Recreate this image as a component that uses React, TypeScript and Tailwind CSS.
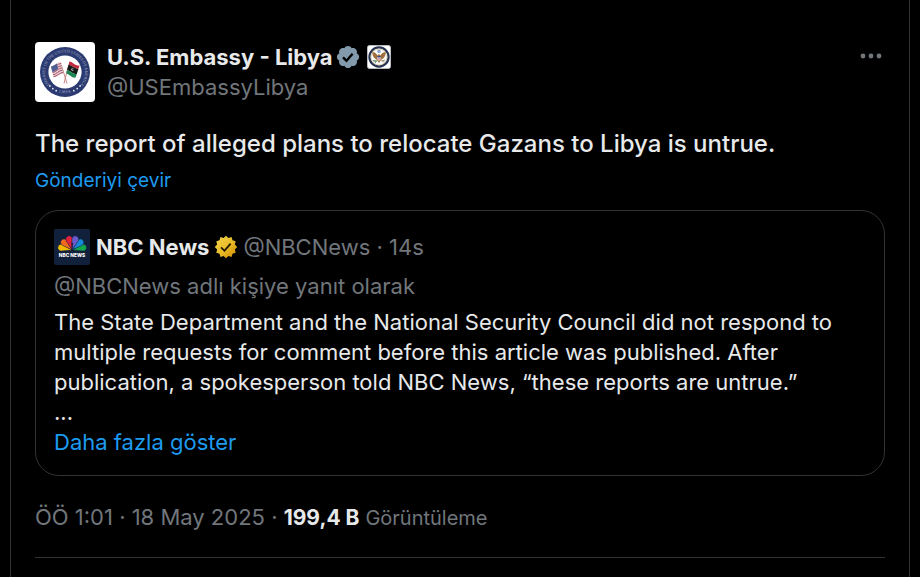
import { clsx } from 'clsx';

const quoteLines = [
  'The State Department and the National Security Council did not respond to',
  'multiple requests for comment before this article was published. After',
  'publication, a spokesperson told NBC News, “these reports are untrue.”',
  '...',
];

const feathers = [
  { angle: -78, color: '#f5b800' },
  { angle: -47, color: '#f26a21' },
  { angle: -16, color: '#e2203c' },
  { angle: 78, color: '#12a84b' },
  { angle: 47, color: '#1689d8' },
  { angle: 16, color: '#6a5acd' },
];

function EmbassySeal() {
  return (
    <svg viewBox="0 0 60 60" className="size-[60px] shrink-0 rounded" role="img" aria-label="Embassy seal">
      <defs>
        <path id="seal-top" d="M14.3 42.7A20 20 0 1 1 45.7 42.7" />
        <path id="seal-bottom" d="M17 46.8A21.5 21.5 0 0 0 43 46.8" />
      </defs>
      <rect width="60" height="60" fill="#fff" />
      <circle cx="30" cy="30" r="25" fill="#2b3a70" />
      <circle cx="30" cy="30" r="16.6" fill="#fff" />
      <text fill="#a3acca" fontSize="4" fontFamily="Liberation Serif, serif">
        <textPath href="#seal-top" startOffset="50%" textAnchor="middle">EMBASSY OF THE UNITED STATES OF AMERICA</textPath>
      </text>
      <text fill="#a3acca" fontSize="4" fontFamily="Liberation Serif, serif">
        <textPath href="#seal-bottom" startOffset="50%" textAnchor="middle">LIBYA</textPath>
      </text>
      <g fill="#e8ebf5">
        <circle cx="14.9" cy="43.9" r="0.9" />
        <circle cx="17.8" cy="46.6" r="0.9" />
        <circle cx="21.2" cy="48.7" r="0.9" />
        <circle cx="45.1" cy="43.9" r="0.9" />
        <circle cx="42.2" cy="46.6" r="0.9" />
        <circle cx="38.8" cy="48.7" r="0.9" />
      </g>
      <path d="M26.5 23.5L32 41.5M33.5 23.5L29 41.5" stroke="#b86a6a" strokeWidth="0.8" />
      <path d="M16 24.5C19 24.5 21.5 20.5 26 19.8L28.4 31.5C24.5 31.5 22 35.5 18.5 35Z" fill="#e3d3d8" />
      <path
        d="M16.5 26.2C20 25.8 22 21.8 26.2 21.4M17 28.4C20.5 28 22.5 24 26.8 23.6M17.5 30.6C21 30.2 23 26.2 27.2 25.8M18 32.8C21.5 32.4 23.5 28.4 27.8 28M18.6 34.6C22 34.6 24 30.8 28.2 30.4"
        stroke="#b04d60"
        strokeWidth="1"
        fill="none"
      />
      <path d="M16 24.5C18.2 24.5 19.8 22.6 21.8 21.6L23.2 26.8C21 28 19.4 30.2 17.3 30Z" fill="#4f5f92" />
      <path d="M34.5 19.5C38 20 40 24 44.5 23.5L43.6 26.6C39.5 27 37 23.2 33.5 22.8Z" fill="#c5283c" />
      <path d="M33.5 22.8C37 23.2 39.5 27 43.6 26.6L41.8 32C37.8 32.2 35.5 28.8 32 28.2Z" fill="#151a18" />
      <path d="M32 28.2C35.5 28.8 37.8 32.2 41.8 32L40.6 35.6C36.5 36 34.5 32 31.2 31.4Z" fill="#1c8650" />
      <circle cx="37.6" cy="27.6" r="1.3" fill="#c9cfcb" />
      <circle cx="38.1" cy="27.4" r="0.9" fill="#151a18" />
    </svg>
  );
}

function StateSeal() {
  return (
    <svg viewBox="0 0 24 24" className="size-6 shrink-0" role="img" aria-label="Department of State">
      <rect x="0.5" y="0.5" width="23" height="23" rx="2" fill="#fff" stroke="#b9bdc1" />
      <circle cx="12" cy="12" r="9.6" fill="#fff" stroke="#26324f" strokeWidth="2.2" />
      <circle cx="12" cy="12" r="7.9" fill="none" stroke="#cdb88a" strokeWidth="0.6" />
      <path d="M5.2 7C7 7 9.5 8 10.5 10.5L12 9L13.5 10.5C14.5 8 17 7 18.8 7C18.6 11 17 13.5 14.5 14.5L12 18L9.5 14.5C7 13.5 5.4 11 5.2 7Z" fill="#a0703c" />
      <path d="M10.2 11h3.6v3.2L12 16l-1.8-1.8Z" fill="#dfe3ee" />
      <path d="M11.2 12v2.8M12.8 12v2.8" stroke="#b5303c" strokeWidth="0.6" />
      <path d="M10.2 11h3.6v1.1h-3.6Z" fill="#31457d" />
      <circle cx="12" cy="6.4" r="1.8" fill="#8fa7cf" />
      <path d="M6 15.5L9.5 16.5M8 17.5L9.5 15.5" stroke="#4d8358" strokeWidth="1.3" />
      <path d="M14.5 16L18 15M14.8 15.2L17 17.5" stroke="#8c7b5e" strokeWidth="0.9" />
    </svg>
  );
}

function NbcLogo() {
  return (
    <svg viewBox="0 0 36 36" className="size-9 shrink-0 rounded-xs" role="img" aria-label="NBC News logo">
      <rect width="36" height="36" fill="#12213b" />
      {feathers.map((f) => (
        <path
          key={f.angle}
          d="M18.2 20.8L14.9 10.6A3.4 3.4 0 1 1 21.5 10.6Z"
          fill={f.color}
          stroke="#12213b"
          strokeWidth="0.5"
          transform={`rotate(${f.angle} 18.2 21)`}
        />
      ))}
      <path d="M18.2 22L17.5 15.4L17 13.6L19 14L18.8 15.4Z" fill="#12213b" />
      <text x="18" y="28" textAnchor="middle" fill="#fff" fontSize="4.8" fontWeight="800" fontFamily="Inter, sans-serif">
        NBC NEWS
      </text>
    </svg>
  );
}

function VerifiedBadge({ gold = false }: { gold?: boolean }) {
  return (
    <svg viewBox="0 0 22 22" className={clsx('size-[26px] shrink-0', gold ? 'text-[#e9b91f]' : 'text-[#829aab]')} role="img" aria-label="Verified">
      {gold ? (
        <>
          <defs>
            <linearGradient id="gold" x1="0" y1="0" x2="1" y2="1">
              <stop offset="0" stopColor="#f2d44a" />
              <stop offset="0.5" stopColor="#e9bd2a" />
              <stop offset="1" stopColor="#d18800" />
            </linearGradient>
          </defs>
          <path
            fill="url(#gold)"
            d="M11 1.4l2 2 2.7-.8.8 2.7 2.7.8-.7 2.8 2 2.1-2 2.1.7 2.8-2.7.8-.8 2.7-2.7-.8-2 2-2-2-2.7.8-.8-2.7-2.7-.8.7-2.8-2-2.1 2-2.1-.7-2.8 2.7-.8.8-2.7 2.7.8z"
          />
        </>
      ) : (
        <path
          fill="currentColor"
          d="M20.396 11c-.018-.646-.215-1.275-.57-1.816-.354-.54-.852-.972-1.438-1.246.223-.607.27-1.264.14-1.897-.131-.634-.437-1.218-.882-1.687-.47-.445-1.053-.75-1.687-.882-.633-.13-1.29-.083-1.897.14-.273-.587-.704-1.086-1.245-1.44S11.647 1.62 11 1.604c-.646.017-1.273.213-1.813.568s-.969.854-1.24 1.44c-.608-.223-1.267-.272-1.902-.14-.635.13-1.22.436-1.69.882-.445.47-.749 1.055-.878 1.688-.13.633-.08 1.29.144 1.896-.587.274-1.087.705-1.443 1.245-.356.54-.555 1.17-.574 1.817.02.647.218 1.276.574 1.817.356.54.856.972 1.443 1.245-.224.606-.274 1.263-.144 1.896.13.634.433 1.218.877 1.688.47.443 1.054.747 1.687.878.633.132 1.29.084 1.897-.136.274.586.705 1.084 1.246 1.439.54.354 1.17.551 1.816.569.647-.016 1.276-.213 1.817-.567s.972-.854 1.245-1.44c.604.239 1.266.296 1.903.164.636-.132 1.22-.447 1.68-.907.46-.46.776-1.044.908-1.681s.075-1.299-.165-1.903c.586-.274 1.084-.705 1.439-1.246.354-.54.551-1.17.569-1.816z"
        />
      )}
      <path d="M6.8 11.4L9.7 14.2L14.9 8.2" fill="none" stroke={gold ? '#1d1600' : '#000'} strokeWidth={gold ? 1.5 : 2} />
    </svg>
  );
}

export default function App() {
  return (
    <div className="min-h-screen bg-black px-2.5 font-[Inter,'Open_Sans',sans-serif] text-[22px] text-[#e7e9ea]">
      <article className="min-h-screen border-x border-[#2f3336] px-6 pt-[42px]">
        <header className="flex items-start gap-3">
          <EmbassySeal />
          <div className="min-w-0 flex-1 leading-[30px]">
            <div className="flex items-center">
              <a href="#profile" className="truncate font-bold">U.S. Embassy - Libya</a>
              <span className="ml-0.5 flex items-center gap-1.5">
                <VerifiedBadge />
                <StateSeal />
              </span>
            </div>
            <a href="#profile" className="text-[#71767b]">@USEmbassyLibya</a>
          </div>
          <button type="button" aria-label="More" className="flex h-7 items-center">
            <svg viewBox="0 0 28 28" className="size-7" fill="#71767b">
              <circle cx="6" cy="14" r="2.4" />
              <circle cx="14" cy="14" r="2.4" />
              <circle cx="22" cy="14" r="2.4" />
            </svg>
          </button>
        </header>

        <p className="mt-6 text-2xl leading-9 font-medium">The report of alleged plans to relocate Gazans to Libya is untrue.</p>
        <button type="button" className="mt-1 block text-[19px] leading-[30px] text-[#1d9bf0]">Gönderiyi çevir</button>

        <section className="mt-3.5 rounded-3xl border border-[#2f3336] px-[18px] py-[18px] leading-[30px]">
          <div className="flex items-center">
            <NbcLogo />
            <span className="ml-1.5 font-bold">NBC News</span>
            <span className="mx-1 flex">
              <VerifiedBadge gold />
            </span>
            <span className="text-[#71767b]">@NBCNews · 14s</span>
          </div>
          <p className="mt-1.5 text-[#71767b]">@NBCNews adlı kişiye yanıt olarak</p>
          <div className="mt-1.5">
            {quoteLines.map((line) => (
              <p key={line}>{line}</p>
            ))}
          </div>
          <a href="#more" className="block text-[#1d9bf0]">Daha fazla göster</a>
        </section>

        <footer className="mt-[26px] border-b border-[#2f3336] pb-6 leading-[30px] text-[#71767b]">
          ÖÖ 1:01 · 18 May 2025 ·{' '}
          <span className="text-[21px]">
            <span className="font-bold text-[#e7e9ea]">199,4 B</span>{' '}
            <span className="text-xl">Görüntüleme</span>
          </span>
        </footer>
      </article>
    </div>
  );
}
